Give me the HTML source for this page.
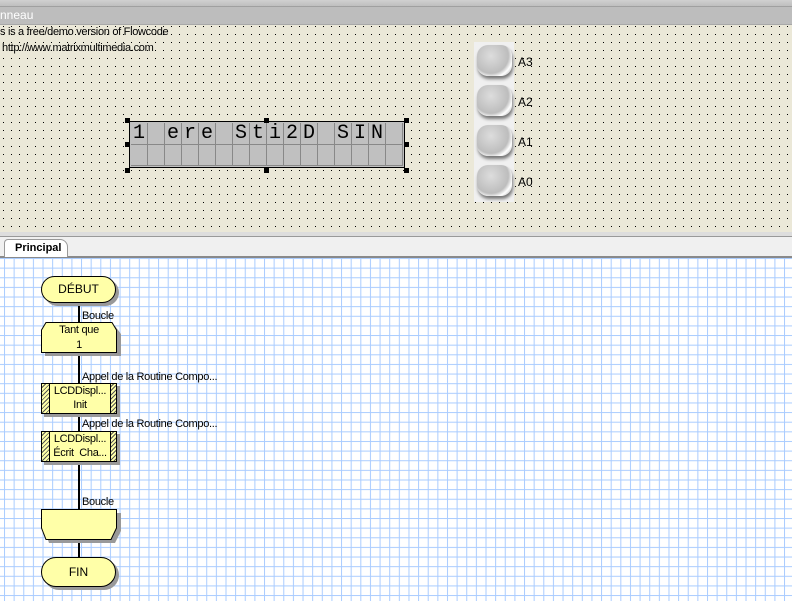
<!DOCTYPE html>
<html><head><style>
body{margin:0;width:792px;height:601px;overflow:hidden;position:relative;font-family:"Liberation Sans",sans-serif;font-size:11px;background:#fff}
.a{position:absolute}
#top{left:0;top:0;width:792px;height:6px;background:linear-gradient(#d0d0d0,#bfbfbf);border-bottom:1px solid #a0a0a0}
#title{left:0;top:7px;width:792px;height:17px;background:#bdbdbd;color:#fff;font-size:12px;line-height:17px;border-bottom:1px solid #a8a8a8}
#band{left:0;top:232px;width:792px;height:4px;background:#ddd;border-bottom:1px solid #999}
#tabs{left:0;top:237px;width:792px;height:19px;background:#f0f0f0;border-bottom:2px solid #8a8a8a}
#tab{left:4px;top:239px;width:64px;height:18px;background:#fff;border:1px solid #999;border-bottom:none;border-radius:4px 8px 0 0;font-weight:bold;font-size:11px;line-height:17px;padding-left:10px;box-sizing:border-box}
.lcd{left:129px;top:121px;width:276px;height:47px;background:#c0c0c0;border:1px solid #000;box-sizing:border-box;display:grid;grid-template-columns:repeat(16,1fr);grid-template-rows:1fr 1fr;padding:1px}
.lcd span{border-right:1px solid #888;border-bottom:1px solid #888;font-family:"Liberation Mono",monospace;font-size:20px;line-height:21px;text-align:center}
.h{width:5px;height:5px;background:#000}
.btn{left:477px;width:35px;height:31px;border-radius:11px;background:radial-gradient(circle at 40% 35%,#ddd,#bdbdbd 60%,#fff 75%,#999);box-shadow:1px 3px 3px #777}
.bl{left:518px;font-size:12px}
.sh{background:#ffffa8;border:1px solid #000;box-shadow:3px 3px 0 #999;text-align:center;box-sizing:border-box}
.hat{background:repeating-linear-gradient(135deg,#ffffa8 0 2px,#555 2px 3px)}
.t{font-size:11px;letter-spacing:-0.3px}
</style></head><body>
<div class="a" id="top"></div>
<div class="a" id="title">nneau</div>
<svg class="a" style="left:0;top:25px" width="792" height="207"><defs><pattern id="d" width="8" height="8" patternUnits="userSpaceOnUse" x="3" y="1"><rect width="8" height="8" fill="#ebe8d8"/><rect x="0" y="0" width="1" height="1" fill="#000"/></pattern></defs><rect width="792" height="207" fill="url(#d)"/></svg>
<svg class="a" style="left:0;top:258px" width="792" height="343"><defs><pattern id="g" width="9.63" height="9.63" patternUnits="userSpaceOnUse" x="4" y="0"><rect width="10" height="10" fill="#fff"/><rect width="1" height="10" fill="#aaccff"/><rect width="10" height="1" fill="#aaccff"/></pattern></defs><rect width="792" height="343" fill="url(#g)"/></svg>
<div class="a t" style="left:0;top:26px">s is a free/demo version of Flowcode</div>
<div class="a t" style="left:2px;top:42px">http://www.matrixmultimedia.com</div>
<div class="a lcd"><span>1</span><span></span><span>e</span><span>r</span><span>e</span><span></span><span>S</span><span>t</span><span>i</span><span>2</span><span>D</span><span></span><span>S</span><span>I</span><span>N</span><span></span><span></span><span></span><span></span><span></span><span></span><span></span><span></span><span></span><span></span><span></span><span></span><span></span><span></span><span></span><span></span><span></span></div>
<div class="a h" style="left:125px;top:118px"></div><div class="a h" style="left:264px;top:118px"></div><div class="a h" style="left:404px;top:118px"></div>
<div class="a h" style="left:125px;top:142px"></div><div class="a h" style="left:404px;top:142px"></div>
<div class="a h" style="left:125px;top:168px"></div><div class="a h" style="left:264px;top:168px"></div><div class="a h" style="left:404px;top:168px"></div>
<div class="a" style="left:474px;top:42px;width:40px;height:160px;background:#f0f0f0"></div>
<div class="a btn" style="top:45px"></div><div class="a bl" style="top:55px">A3</div>
<div class="a btn" style="top:85px"></div><div class="a bl" style="top:95px">A2</div>
<div class="a btn" style="top:125px"></div><div class="a bl" style="top:135px">A1</div>
<div class="a btn" style="top:165px"></div><div class="a bl" style="top:175px">A0</div>
<div class="a" id="band"></div>
<div class="a" id="tabs"></div>
<div class="a" id="tab">Principal</div>
<div class="a" style="left:78px;top:298px;width:2px;height:262px;background:#000"></div>
<div class="a sh" style="left:41px;top:276px;width:75px;height:27px;border-radius:14px;line-height:25px;font-size:12px">DÉBUT</div>
<div class="a t" style="left:82px;top:310px">Boucle</div>
<svg class="a" style="left:41px;top:322px" width="80" height="36"><path d="M5 1H71L77 9V31H1V9Z" fill="#999" transform="translate(3,3)"/><path d="M5 .5H71L75.5 8V30.5H.5V8Z" fill="#ffffa8" stroke="#000"/></svg>
<div class="a t" style="left:41px;top:323px;width:76px;text-align:center;line-height:15px">Tant que<br>1</div>
<div class="a t" style="left:82px;top:371px">Appel de la Routine Compo...</div>
<div class="a sh hat" style="left:41px;top:383px;width:76px;height:31px"></div>
<div class="a t" style="left:49px;top:384px;width:60px;height:29px;background:#ffffa8;border-left:1px solid #000;border-right:1px solid #000;text-align:center;line-height:14px">LCDDispl...<br>Init</div>
<div class="a t" style="left:82px;top:418px">Appel de la Routine Compo...</div>
<div class="a sh hat" style="left:41px;top:431px;width:76px;height:31px"></div>
<div class="a t" style="left:49px;top:432px;width:60px;height:29px;background:#ffffa8;border-left:1px solid #000;border-right:1px solid #000;text-align:center;line-height:14px">LCDDispl...<br>Écrit&nbsp; Cha...</div>
<div class="a t" style="left:82px;top:496px">Boucle</div>
<svg class="a" style="left:41px;top:509px" width="80" height="36"><path d="M1 1H77V19L71 31H5L1 19Z" fill="#999" transform="translate(3,3)"/><path d="M.5 .5H75.5V19L70 30.5H5L.5 19Z" fill="#ffffa8" stroke="#000"/></svg>
<div class="a sh" style="left:41px;top:557px;width:75px;height:30px;border-radius:15px;line-height:28px;font-size:12px">FIN</div>
</body></html>
